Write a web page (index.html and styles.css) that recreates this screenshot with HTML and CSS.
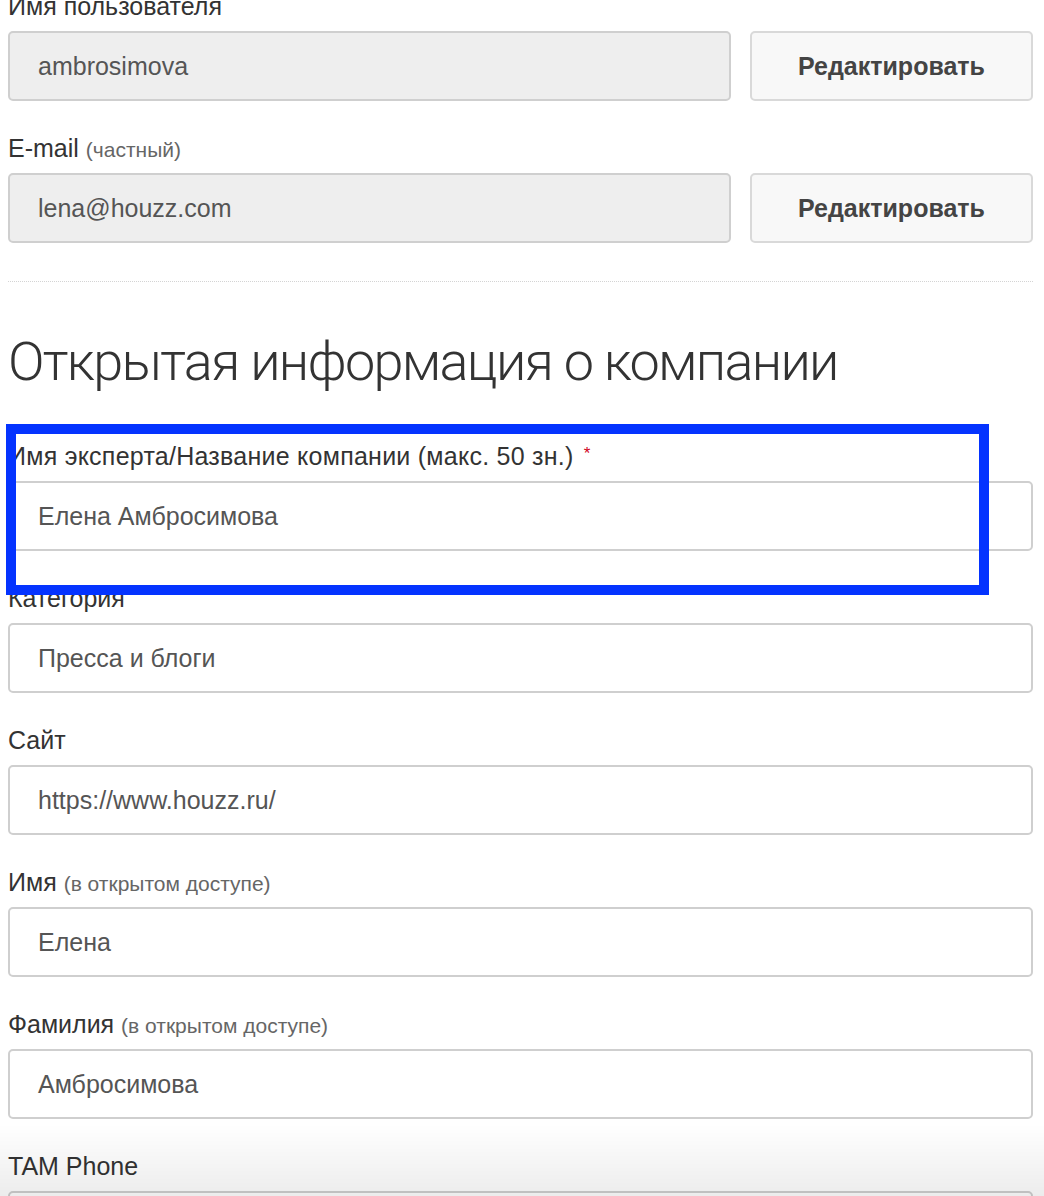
FILE: index.html
```html
<!DOCTYPE html>
<html lang="ru">
<head>
<meta charset="utf-8">
<title>Профиль</title>
<link rel="stylesheet" href="styles.css">
</head>
<body>
<div class="page">
  <div class="field">
    <div class="label">Имя пользователя</div>
    <div class="row">
      <div class="input disabled">ambrosimova</div>
      <button class="btn">Редактировать</button>
    </div>
  </div>
  <div class="field last-account">
    <div class="label">E-mail <span class="note">(частный)</span></div>
    <div class="row">
      <div class="input disabled">lena@houzz.com</div>
      <button class="btn">Редактировать</button>
    </div>
  </div>
  <div class="divider"></div>
  <h1 class="heading">Открытая информация о компании</h1>
  <div class="field highlight">
    <div class="label wide">Имя эксперта/Название компании (макс. 50 зн.) <span class="req">*</span></div>
    <div class="input">Елена Амбросимова</div>
    <div class="marker"></div>
  </div>
  <div class="field">
    <div class="label">Категория</div>
    <div class="input">Пресса и блоги</div>
  </div>
  <div class="field">
    <div class="label">Сайт</div>
    <div class="input">https://www.houzz.ru/</div>
  </div>
  <div class="field">
    <div class="label">Имя <span class="note">(в открытом доступе)</span></div>
    <div class="input">Елена</div>
  </div>
  <div class="field">
    <div class="label">Фамилия <span class="note">(в открытом доступе)</span></div>
    <div class="input">Амбросимова</div>
  </div>
  <div class="field">
    <div class="label">TAM Phone</div>
    <div class="input"></div>
  </div>
</div>
<div class="fade"></div>
</body>
</html>
```
FILE: styles.css
```css
* { box-sizing: border-box; }
html, body { margin: 0; padding: 0; background: #fff; }
body {
  font-family: "Liberation Sans", Arial, Helvetica, sans-serif;
  color: #333;
  overflow: hidden;
}
.page {
  margin: -9px 11px 0 8px;
}
.field {
  margin-bottom: 32px;
}
.label {
  font-size: 25px;
  line-height: 30px;
  height: 30px;
  margin-bottom: 10px;
  color: #333;
  white-space: nowrap;
}
.label.wide {
  letter-spacing: 0.25px;
}
.note {
  font-size: 21px;
  line-height: 1;
  color: #666;
  letter-spacing: 0;
}
.req {
  color: #d0021b;
  font-size: 17px;
  line-height: 1;
  vertical-align: 6px;
  margin-left: 3px;
}
.row {
  display: grid;
  grid-template-columns: 1fr 283px;
  column-gap: 19px;
}
.input {
  height: 70px;
  border: 2px solid #cfcfcf;
  border-radius: 5px;
  background: #fff;
  padding: 0 28px;
  display: flex;
  align-items: center;
  font-size: 25px;
  color: #555;
}
.input.disabled {
  background: #eeeeee;
}
.btn {
  height: 70px;
  border: 2px solid #d9d9d9;
  border-radius: 5px;
  background: #f8f8f8;
  font-family: "Liberation Sans", Arial, sans-serif;
  font-size: 25px;
  font-weight: bold;
  color: #444;
  padding: 0;
}
.last-account { margin-bottom: 38px; }
.divider {
  border-top: 1px dotted #d4d4d4;
  height: 0;
}
.heading {
  margin: 48px 0 47px 0;
  font-family: Roboto, "Liberation Sans", sans-serif;
  font-weight: 300;
  font-size: 54px;
  line-height: 64px;
  color: #333;
  letter-spacing: -1.7px;
  white-space: nowrap;
}
.highlight {
  position: relative;
}
.marker {
  position: absolute;
  left: -2px;
  top: -17px;
  width: 983px;
  height: 171px;
  border: 10px solid #0433ff;
  pointer-events: none;
}
.fade {
  position: fixed;
  left: 0;
  right: 0;
  bottom: 0;
  height: 72px;
  background: linear-gradient(to bottom, rgba(0,0,0,0), rgba(0,0,0,0.075));
  pointer-events: none;
}
```
